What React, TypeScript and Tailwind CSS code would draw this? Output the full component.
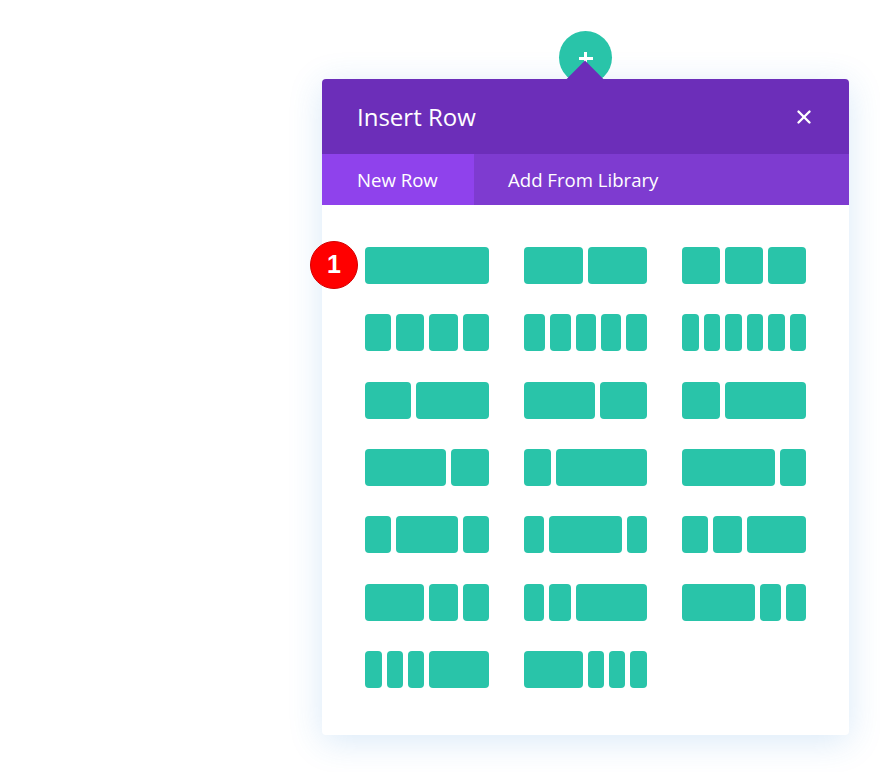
import { X } from 'lucide-react';

// widths of each block in a layout preview (used as flex weights)
const layouts: number[][] = [
  [123], [59, 59], [37, 38, 38],
  [26, 28, 28, 26], [21, 21, 20, 20, 21], [16, 16, 16, 16, 16, 16],
  [46, 72], [72, 48], [37, 81],
  [81, 37], [28, 92], [92, 26],
  [26, 61, 26], [21, 73, 21], [26, 28, 59],
  [59, 28, 26], [21, 22, 72], [72, 21, 20],
  [17, 16, 16, 59], [59, 16, 16, 17],
];

function LayoutPreview({ cols }: { cols: number[] }) {
  return (
    <div className="flex gap-[5px] h-[37px] cursor-pointer">
      {cols.map((w, i) => (
        <div key={i} className="basis-0 rounded-[4px] bg-[#29c4a9]" style={{ flexGrow: w }} />
      ))}
    </div>
  );
}

export default function App() {
  return (
    <div className="min-h-[772px] bg-white pl-[322px] pt-[79px] pb-[37px] font-['Open_Sans',sans-serif]">
      <div className="relative w-[527px] rounded-[4px] bg-white shadow-[0_6px_34px_rgba(43,135,218,0.18)]">
        {/* add button + pointer */}
        <div className="absolute left-[237px] top-[-48px] w-[53px] h-[53px] rounded-full bg-[#29c4a9] flex justify-center">
          <div className="mt-[21px] relative w-[14px] h-[14px]">
            <div className="absolute left-0 right-0 top-[5px] h-[3px] bg-white" />
            <div className="absolute left-[5.5px] top-0 bottom-0 w-[3px] bg-white" />
          </div>
        </div>
        <div className="absolute left-[250px] top-[-13px] w-[26px] h-[26px] rotate-45 bg-[#6c2eb9]" />

        <div className="relative flex items-center justify-between h-[75px] pl-[35px] pr-[34px] rounded-t-[4px] bg-[#6c2eb9] text-white">
          <h2 className="text-[24px] font-medium">Insert Row</h2>
          <X className="w-[22px] h-[22px]" strokeWidth={2.6} />
        </div>

        <div className="flex h-[51px] bg-[#7e3bd0] text-white text-[18.6px] font-medium">
          <div className="flex items-center w-[152px] pl-[35px] pt-[1px] bg-[#8f42ec]">New Row</div>
          <div className="flex items-center pl-[34px] pt-[1px]">Add From Library</div>
        </div>

        <div className="relative grid grid-cols-3 gap-x-[35px] gap-y-[30.33px] px-[43px] pt-[42px] pb-[47px]">
          {layouts.map((cols, i) => (
            <LayoutPreview key={i} cols={cols} />
          ))}
          <div className="absolute left-[-12px] top-[36px] w-[48px] h-[48px] rounded-full bg-[#ff0000] border border-[#d40000] flex items-center justify-center text-white text-[25px] font-bold font-['Liberation_Sans',sans-serif]">
            1
          </div>
        </div>
      </div>
    </div>
  );
}
